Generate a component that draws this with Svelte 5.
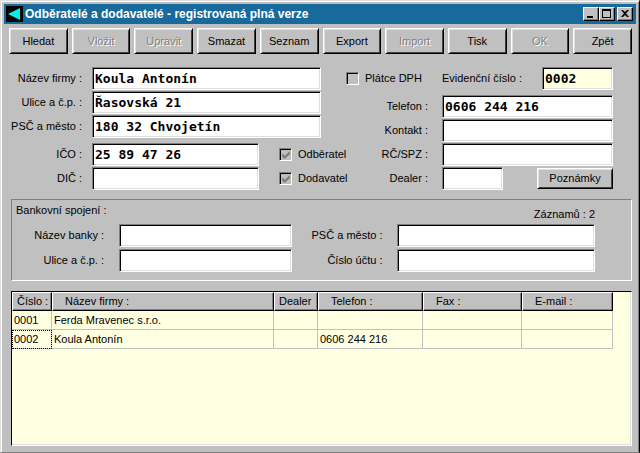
<script>
    let toolbar = [
        { label: "Hledat" },
        { label: "Vložit", disabled: true },
        { label: "Upravit", disabled: true },
        { label: "Smazat" },
        { label: "Seznam" },
        { label: "Export" },
        { label: "Import", disabled: true },
        { label: "Tisk" },
        { label: "OK", disabled: true },
        { label: "Zpět" },
    ];

    let records = [
        { id: "0001", name: "Ferda Mravenec s.r.o.", dealer: "", phone: "", fax: "", email: "" },
        { id: "0002", name: "Koula Antonín", dealer: "", phone: "0606 244 216", fax: "", email: "" },
    ];

    let selected = $state("0002");

    let firm = $state({
        name: "Koula Antonín",
        street: "Řasovská 21",
        city: "180 32 Chvojetín",
        ico: "25 89 47 26",
        dic: "",
        number: "0002",
        phone: "0606 244 216",
        contact: "",
        rc: "",
        dealer: "",
        vat: false,
    });

    let bank = $state({ name: "", street: "", city: "", account: "" });
</script>

<div class="window">
    <header class="titlebar">
        <svg class="app-icon" viewBox="0 0 17 16" aria-hidden="true">
            <rect width="17" height="16" fill="#000" />
            <path d="M2 8 L14 2 V14 Z" fill="#00f0f0" />
        </svg>
        <h1>Odběratelé a dodavatelé - registrovaná plná verze</h1>
        <div class="controls">
            <button aria-label="Minimalizovat">
                <svg viewBox="0 0 12 10"><path d="M2 7h6v2H2z" /></svg>
            </button>
            <button aria-label="Maximalizovat">
                <svg viewBox="0 0 12 10"><path fill-rule="evenodd" d="M1 0h9v9H1zM2 2v6h7V2z" /></svg>
            </button>
            <button class="close" aria-label="Zavřít">
                <svg viewBox="0 0 12 10"><path d="M2 1h2l2 2 2-2h2L7 4.500l3 3.500H8L6 6 4 8H2l3-3.500z" /></svg>
            </button>
        </div>
    </header>

    <nav class="toolbar">
        {#each toolbar as item}
            <button class="btn" disabled={item.disabled}>{item.label}</button>
        {/each}
    </nav>

    <main>
        <form class="form">
            <div class="left">
                <label for="name">Název firmy :</label>
                <input id="name" class="field wide" bind:value={firm.name} />
                <label for="street">Ulice a č.p. :</label>
                <input id="street" class="field wide" bind:value={firm.street} />
                <label for="city">PSČ a město :</label>
                <input id="city" class="field wide" bind:value={firm.city} />
                <span class="spacer"></span>
                <label for="ico">IČO :</label>
                <input id="ico" class="field" bind:value={firm.ico} />
                <label class="check"><input type="checkbox" checked disabled /> Odběratel</label>
                <label for="dic">DIČ :</label>
                <input id="dic" class="field" bind:value={firm.dic} />
                <label class="check"><input type="checkbox" checked disabled /> Dodavatel</label>
            </div>

            <div class="right">
                <div class="top">
                    <label class="check"><input type="checkbox" bind:checked={firm.vat} /> Plátce DPH</label>
                    <label for="number">Evidenční číslo :</label>
                    <input id="number" class="field number" bind:value={firm.number} />
                </div>
                <div class="contact">
                    <label for="phone">Telefon :</label>
                    <input id="phone" class="field wide" bind:value={firm.phone} />
                    <label for="contact">Kontakt :</label>
                    <input id="contact" class="field wide" bind:value={firm.contact} />
                    <label for="rc">RČ/SPZ :</label>
                    <input id="rc" class="field wide" bind:value={firm.rc} />
                    <label for="dealer">Dealer :</label>
                    <input id="dealer" class="field" bind:value={firm.dealer} />
                    <button type="button" class="btn notes">Poznámky</button>
                </div>
            </div>
        </form>

        <section class="bank">
            <div class="bank-head">
                <h2>Bankovní spojení :</h2>
                <p>Záznamů : {records.length}</p>
            </div>
            <div class="bank-fields">
                <label for="bank-name">Název banky :</label>
                <input id="bank-name" class="field" bind:value={bank.name} />
                <label for="bank-city">PSČ a město :</label>
                <input id="bank-city" class="field" bind:value={bank.city} />
                <label for="bank-street">Ulice a č.p. :</label>
                <input id="bank-street" class="field" bind:value={bank.street} />
                <label for="account">Číslo účtu :</label>
                <input id="account" class="field" bind:value={bank.account} />
            </div>
        </section>

        <div class="grid-box">
            <table>
                <colgroup>
                    <col class="c-id" />
                    <col />
                    <col class="c-dealer" />
                    <col class="c-phone" />
                    <col class="c-fax" />
                    <col class="c-email" />
                </colgroup>
                <thead>
                    <tr>
                        <th class="tight">Číslo :</th>
                        <th>Název firmy :</th>
                        <th class="tight">Dealer</th>
                        <th>Telefon :</th>
                        <th>Fax :</th>
                        <th>E-mail :</th>
                    </tr>
                </thead>
                <tbody>
                    {#each records as r}
                        <tr onclick={() => (selected = r.id)}>
                            <td class:focused={selected === r.id}>{r.id}</td>
                            <td>{r.name}</td>
                            <td>{r.dealer}</td>
                            <td>{r.phone}</td>
                            <td>{r.fax}</td>
                            <td>{r.email}</td>
                        </tr>
                    {/each}
                </tbody>
            </table>
        </div>
    </main>
</div>

<style>
    :global(body) {
        margin: 0;
        background: #c0c0c0;
    }

    * {
        box-sizing: border-box;
    }

    .window {
        display: flex;
        flex-direction: column;
        min-height: 100vh;
        padding: 2px;
        background: #c0c0c0;
        border: 1px solid;
        border-color: #dfdfdf #000 #808080 #dfdfdf;
        box-shadow: inset 1px 1px #fff, inset -1px 0 #808080;
        color: #000;
        font-family: "Liberation Sans", Arial, sans-serif;
        font-size: 11px;
        line-height: 13px;
    }

    button,
    input {
        font: inherit;
        color: inherit;
    }

    .titlebar {
        display: flex;
        align-items: center;
        height: 20px;
        margin: 1px 1px 0;
        padding: 0 3px 0 2px;
        background: #18699c;
        color: #fff;
    }

    .app-icon {
        width: 17px;
        height: 16px;
        margin-right: 2px;
    }

    h1 {
        flex: 1;
        margin: 0;
        font-size: 12px;
        line-height: 16px;
        white-space: nowrap;
    }

    .controls {
        display: flex;
    }

    .controls button {
        width: 16px;
        height: 14px;
        padding: 0;
        background: #c0c0c0;
        border: 1px solid;
        border-color: #fff #000 #000 #fff;
        box-shadow: inset -1px -1px #808080;
    }

    .controls svg {
        display: block;
        width: 12px;
        height: 10px;
        margin: 1px;
    }

    .controls .close {
        margin-left: 2px;
    }

    .btn {
        padding: 0;
        background: #c0c0c0;
        border: 1px solid;
        border-color: #fff #000 #000 #fff;
        box-shadow: inset 1px 1px #dfdfdf, inset -1px -1px #404040;
    }

    .btn:disabled {
        color: #808080;
        text-shadow: 1px 1px #fff;
    }

    .toolbar {
        display: grid;
        grid-template-columns: repeat(10, 1fr);
        gap: 4px;
        padding: 4px 5px 0 6px;
    }

    .toolbar .btn {
        height: 26px;
    }

    main {
        display: flex;
        flex: 1;
        flex-direction: column;
        padding: 13px 5px 4px 8px;
    }

    label {
        text-align: right;
        white-space: nowrap;
    }

    .field {
        width: 100%;
        min-width: 0;
        height: 23px;
        padding: 0 2px 1px;
        background: #fff;
        border: 1px solid;
        border-color: #808080 #fff #fff #808080;
        border-radius: 0;
        box-shadow: inset 1px 1px #000, inset -1px -1px #dfdfdf;
        outline: none;
        font-family: "DejaVu Sans Mono", "Liberation Mono", monospace;
        font-size: 13px;
        font-weight: bold;
    }

    .form {
        display: grid;
        grid-template-columns: 310fr 267fr;
        gap: 25px;
        padding-right: 19px;
    }

    .left {
        display: grid;
        grid-template-columns: 71px minmax(0, 167fr) minmax(0, 52fr);
        column-gap: 10px;
        row-gap: 1px;
        align-items: center;
        align-content: start;
    }

    .left .wide {
        grid-column: span 2;
    }

    .spacer {
        grid-column: 1 / -1;
        height: 3px;
    }

    .check {
        display: flex;
        align-items: center;
        gap: 6px;
    }

    .left .check {
        padding-left: 10px;
    }

    .check input {
        appearance: none;
        flex: none;
        width: 13px;
        height: 13px;
        margin: 0;
        border: 1px solid;
        border-color: #808080 #fff #fff #808080;
        box-shadow: inset 1px 1px #000;
    }

    .check input:checked::after {
        content: "";
        display: block;
        width: 8px;
        height: 8px;
        margin: 2px;
        background: #808080;
        clip-path: polygon(0 28%, 34% 58%, 100% 0, 100% 42%, 34% 100%, 0 72%);
    }

    .top {
        display: flex;
        align-items: center;
        margin-bottom: 5px;
    }

    .top .check {
        flex: 1;
    }

    .top .number {
        width: 71px;
        margin-left: 20px;
        background: #ffffe1;
    }

    .contact {
        display: grid;
        grid-template-columns: 82px minmax(0, 61fr) minmax(0, 96fr);
        column-gap: 14px;
        row-gap: 1px;
        align-items: center;
    }

    .contact .wide {
        grid-column: span 2;
    }

    .notes {
        justify-self: end;
        width: 76px;
        height: 21px;
    }

    .bank {
        margin-top: 9px;
        padding: 4px 36px 8px 4px;
        border: 1px solid;
        border-color: #808080 #fff #fff #808080;
    }

    .bank-head {
        display: flex;
        justify-content: space-between;
        height: 20px;
    }

    h2,
    p {
        margin: 0;
        font-size: 11px;
        font-weight: normal;
        line-height: 13px;
    }

    .bank-head p {
        padding-top: 4px;
    }

    .bank-fields {
        display: grid;
        grid-template-columns: 88px 173fr 75px 197fr;
        gap: 2px 15px;
        align-items: center;
    }

    .grid-box {
        flex: 1;
        margin-top: 10px;
        background: #ffffe1;
        border: 1px solid;
        border-color: #000 #fff #fff #000;
        box-shadow: inset -1px -1px #dfdfdf;
    }

    table {
        width: calc(100% - 18px);
        border-spacing: 0;
        table-layout: fixed;
    }

    .c-id {
        width: 40px;
    }

    .c-dealer {
        width: 44px;
    }

    .c-phone {
        width: 105px;
    }

    .c-fax {
        width: 99px;
    }

    .c-email {
        width: 91px;
    }

    th,
    td {
        height: 19px;
        padding: 0 2px;
        overflow: hidden;
        text-align: left;
        font-weight: normal;
        white-space: nowrap;
    }

    th {
        padding-left: 12px;
        background: #c0c0c0;
        border: 1px solid;
        border-color: #fff #000 #000 #fff;
        box-shadow: inset -1px -1px #808080;
    }

    th.tight {
        padding-left: 4px;
    }

    td {
        border: solid #c0c0c0;
        border-width: 0 1px 1px 0;
    }

    .focused {
        outline: 1px dotted #000;
        outline-offset: -1px;
    }
</style>
